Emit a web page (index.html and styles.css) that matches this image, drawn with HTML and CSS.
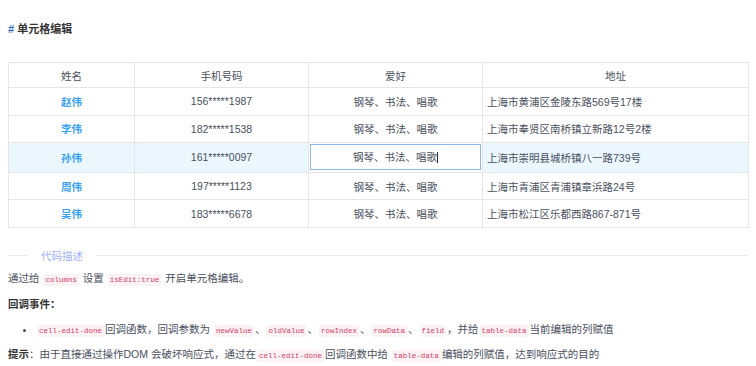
FILE: index.html
```html
<!DOCTYPE html>
<html lang="zh">
<head>
<meta charset="utf-8">
<link rel="stylesheet" href="styles.css">
</head>
<body>
<div class="page">
  <h3 class="title"><span class="hash">#</span> 单元格编辑</h3>
  <table class="grid">
    <colgroup>
      <col class="c1"><col class="c2"><col class="c3"><col class="c4">
    </colgroup>
    <thead>
      <tr><th>姓名</th><th>手机号码</th><th>爱好</th><th>地址</th></tr>
    </thead>
    <tbody>
      <tr><td class="name">赵伟</td><td>156*****1987</td><td>钢琴、书法、唱歌</td><td class="addr">上海市黄浦区金陵东路569号17楼</td></tr>
      <tr><td class="name">李伟</td><td>182*****1538</td><td>钢琴、书法、唱歌</td><td class="addr">上海市奉贤区南桥镇立新路12号2楼</td></tr>
      <tr class="hover"><td class="name">孙伟</td><td>161*****0097</td><td class="editing"><div class="edit-box">钢琴、书法、唱歌<span class="caret"></span></div></td><td class="addr">上海市崇明县城桥镇八一路739号</td></tr>
      <tr><td class="name">周伟</td><td>197*****1123</td><td>钢琴、书法、唱歌</td><td class="addr">上海市青浦区青浦镇章浜路24号</td></tr>
      <tr><td class="name">吴伟</td><td>183*****6678</td><td>钢琴、书法、唱歌</td><td class="addr">上海市松江区乐都西路867-871号</td></tr>
    </tbody>
  </table>
  <div class="divider"><span class="line short"></span><span class="divider-text">代码描述</span><span class="line"></span></div>
  <p class="para">通过给 <code>columns</code> 设置 <code>isEdit:true</code> 开启单元格编辑。</p>
  <p class="para"><strong>回调事件：</strong></p>
  <ul class="list">
    <li><code>cell-edit-done</code>回调函数，回调参数为 <code>newValue</code>、<code>oldValue</code>、<code>rowIndex</code>、<code>rowData</code>、<code>field</code>，并给<code>table-data</code>当前编辑的列赋值</li>
  </ul>
  <p class="para"><strong>提示</strong>：由于直接通过操作DOM 会破坏响应式，通过在<code>cell-edit-done</code>回调函数中给 <code>table-data</code>编辑的列赋值，达到响应式的目的</p>
</div>
</body>
</html>
```
FILE: styles.css
```css
html, body {
  margin: 0;
  padding: 0;
  background: #fff;
}
body {
  font-family: "Liberation Sans", Arial, "Noto Sans CJK SC", sans-serif;
  font-size: 10.5px;
  color: #495060;
}
.page {
  padding: 0 8px;
}
.title {
  margin: 0;
  padding-top: 20px;
  height: 62px;
  box-sizing: border-box;
  font-size: 11px;
  font-weight: bold;
  color: #333;
}
.hash {
  color: #2d6fc4;
}
.grid {
  width: 740px;
  border-collapse: collapse;
  border: 1px solid #e4e4e4;
  table-layout: fixed;
}
.c1 { width: 126px; }
.c2 { width: 174px; }
.c3 { width: 174px; }
.c4 { width: 266px; }
.grid th, .grid td {
  border: 1px solid #e6e6e6;
  text-align: center;
  font-weight: normal;
  padding: 0;
  color: #495060;
}
.grid th {
  height: 24px;
}
.grid td {
  height: 26.6px;
}
.grid td.name {
  color: #3ba2f2;
  font-weight: bold;
}
.grid td.addr {
  text-align: left;
  padding-left: 4px;
}
.grid tr.hover td {
  background: #ebf7ff;
}
.grid tr.hover td.editing {
  background: #fff;
  padding: 1px 1px;
}
.edit-box {
  border: 1px solid #8fb4ec;
  height: 24px;
  line-height: 24px;
  text-align: center;
  background: #fff;
}
.caret {
  display: inline-block;
  width: 1px;
  height: 11px;
  background: #333;
  vertical-align: -2px;
}
.divider {
  display: flex;
  align-items: center;
  margin-top: 21px;
  height: 14px;
}
.line {
  flex: 1;
  height: 1px;
  background: #ececec;
}
.line.short {
  flex: 0 0 20px;
}
.divider-text {
  padding: 0 13px;
  color: #a4b0f6;
}
.para {
  margin: 7px 0 0;
  line-height: 17px;
}
.para strong {
  font-weight: bold;
  color: #333;
}
code {
  font-family: "Liberation Mono", "Courier New", monospace;
  font-size: 7.5px;
  color: #d6416a;
  background: #fbf2f4;
  padding: 2px 2px;
  margin: 0 1px;
  border-radius: 2px;
}
.list {
  margin: 8px 0 0;
  padding-left: 28px;
  line-height: 17px;
}
.list li {
  list-style: disc;
}
.list + .para {
  margin-top: 6px;
}
```
